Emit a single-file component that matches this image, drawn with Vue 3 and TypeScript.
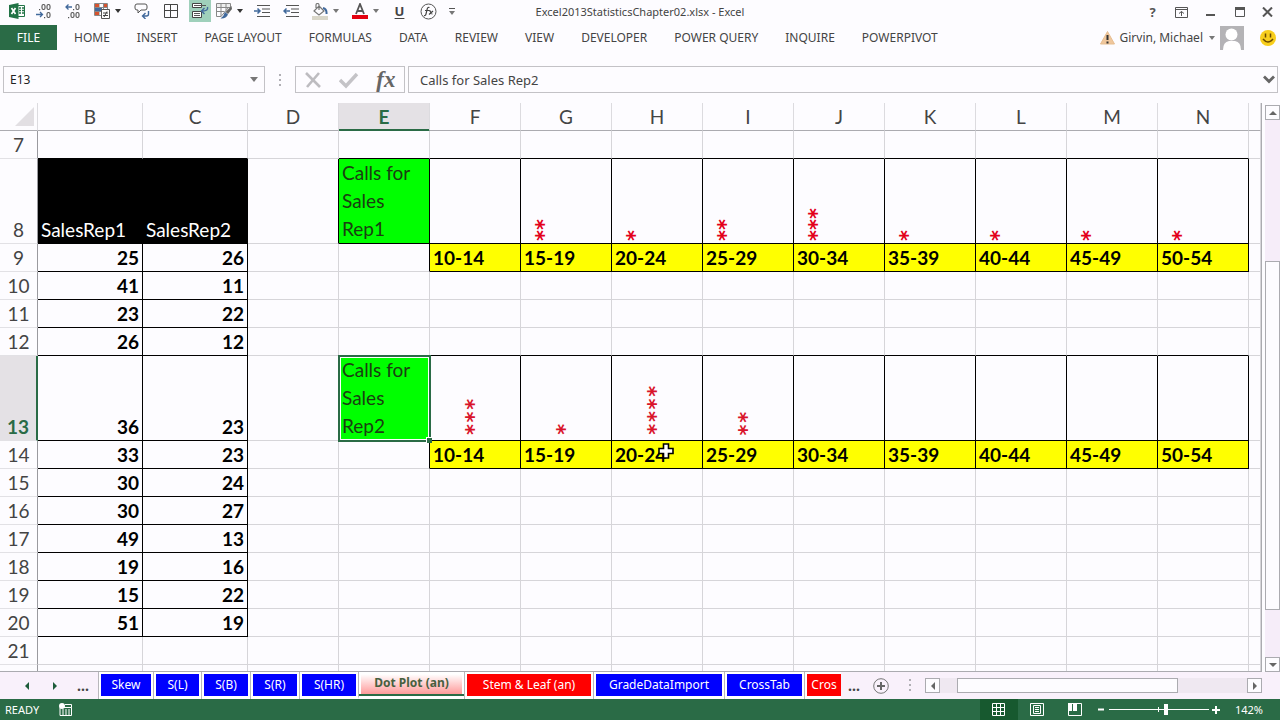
<script setup lang="ts">
import { ref } from 'vue'

interface Cell { text?: string; cls?: string }
interface Row { n: string; cells: Cell[]; cls?: string }

const tabs = ['HOME', 'INSERT', 'PAGE LAYOUT', 'FORMULAS', 'DATA', 'REVIEW', 'VIEW', 'DEVELOPER', 'POWER QUERY', 'INQUIRE', 'POWERPIVOT']
const cols = ['B', 'C', 'D', 'E', 'F', 'G', 'H', 'I', 'J', 'K', 'L', 'M', 'N', '']
const bins = ['10-14', '15-19', '20-24', '25-29', '30-34', '35-39', '40-44', '45-49', '50-54']
const rep1Dots = [0, 2, 1, 2, 3, 1, 1, 1, 1]
const rep2Dots = [3, 1, 4, 2, 0, 0, 0, 0, 0]
const data: Record<number, [number, number]> = {
  9: [25, 26], 10: [41, 11], 11: [23, 22], 12: [26, 12], 13: [36, 23], 14: [33, 23],
  15: [30, 24], 16: [30, 27], 17: [49, 13], 18: [19, 16], 19: [15, 22], 20: [51, 19],
}

const rows: Row[] = []
for (let n = 7; n <= 22; n++) {
  const cells: Cell[] = []
  const pair = data[n]
  if (pair) cells.push({ text: String(pair[0]), cls: 'num' }, { text: String(pair[1]), cls: 'num' })
  else if (n === 8) cells.push({ text: 'SalesRep1', cls: 'head' }, { text: 'SalesRep2', cls: 'head' })
  else if (n === 7) cells.push({ cls: 'kb' }, { cls: 'kb' })
  else cells.push({}, {})
  const dotRow = n === 8 || n === 13
  cells.push({ cls: dotRow ? 'd-edge' : '' })
  if (dotRow) {
    cells.push({ text: n === 8 ? 'Calls for Sales Rep1' : 'Calls for Sales Rep2', cls: n === 8 ? 'green' : 'green active' })
    const counts = n === 8 ? rep1Dots : rep2Dots
    counts.forEach(c => cells.push({ text: '*'.repeat(c), cls: n === 8 ? 'plot small' : 'plot' }))
  } else if (n === 9 || n === 14) {
    cells.push({ cls: 'kr' })
    bins.forEach(b => cells.push({ text: b, cls: 'bin' }))
  } else {
    for (let i = 0; i < 10; i++) cells.push({ cls: n === 7 || n === 12 ? 'kb' : '' })
  }
  cells.push({})
  rows.push({ n: n < 22 ? String(n) : '', cells, cls: (dotRow ? 'tall' : '') + (n === 13 ? ' current' : '') })
}

const sheets = [
  { name: 'Skew', color: 'blue', width: 50 }, { name: 'S(L)', color: 'blue', width: 43 }, { name: 'S(B)', color: 'blue', width: 44 },
  { name: 'S(R)', color: 'blue', width: 44 }, { name: 'S(HR)', color: 'blue', width: 54 }, { name: 'Dot Plot (an)', color: 'sel', width: 101 },
  { name: 'Stem & Leaf (an)', color: 'red', width: 124 }, { name: 'GradeDataImport', color: 'blue', width: 126 },
  { name: 'CrossTab', color: 'blue', width: 75 }, { name: 'Cros', color: 'red cut', width: 34 },
]
const nameBox = ref('E13')
const formula = ref('Calls for Sales Rep2')
const zoom = ref(142)
</script>

<template>
  <div class="app">
    <header class="title">
      <div class="qat">
        <button aria-label="Excel" class="b24"><svg width="16" height="16" viewBox="0 0 16 16"><path d="M9 2.500h6.500v11H9" fill="#fff" stroke="#217346"/><path d="M10 5h2M13 5h2M10 7.500h2M13 7.500h2M10 10h2M13 10h2" stroke="#217346" stroke-width="1.500"/><path d="M0 2 9.500 0v16L0 14z" fill="#217346"/><path d="m2.500 5 4 6M6.500 5l-4 6" stroke="#fff" stroke-width="1.700"/></svg></button>
        <button aria-label="Decrease decimal" class="b29"><svg width="16" height="16" viewBox="0 0 16 16"><g fill="none" stroke="#555" stroke-width="1.100"><rect x="6" y="1.500" width="3" height="5" rx="1.500"/><rect x="11" y="1.500" width="3" height="5" rx="1.500"/><rect x="11" y="9.500" width="3" height="5" rx="1.500"/></g><path d="M3 6h1.200v1.200H3zM8 14h1.200v1.200H8z" fill="#555"/><path d="M0 11.500h6M4 9l2.500 2.500L4 14" fill="none" stroke="#41699c" stroke-width="1.300"/></svg></button>
        <button aria-label="Increase decimal" class="b29"><svg width="16" height="16" viewBox="0 0 16 16"><g fill="none" stroke="#555" stroke-width="1.100"><rect x="11" y="1.500" width="3" height="5" rx="1.500"/><rect x="6" y="9.500" width="3" height="5" rx="1.500"/><rect x="11" y="9.500" width="3" height="5" rx="1.500"/></g><path d="M8 6h1.200v1.200H8zM3 14h1.200v1.200H3z" fill="#555"/><path d="M7 4H1M3.500 1.500 1 4l2.500 2.500" fill="none" stroke="#41699c" stroke-width="1.300"/></svg></button>
        <button aria-label="Conditional formatting" class="b40 split"><svg width="16" height="16" viewBox="0 0 16 16"><path d="M.5.500h13v12H.5zM.5 4.500h13M.5 8.500h13M5 .5v12M9.500 .5v12" fill="#fff" stroke="#888"/><path d="M1 1h4v3H1zM1 9h4v3H1z" fill="#d6532f"/><path d="M1 5h7v3H1z" fill="#41699c"/><path d="M10 1h3v3h-3z" fill="#d6532f"/><path d="M7.500 6.500h8v9h-8z" fill="#fff" stroke="#555"/><path d="M9 10h5M9 12.500h5M13 8.500l-3 5.500" stroke="#444"/></svg><i class="caret dark"></i></button>
        <button aria-label="Comment" class="b29"><svg width="16" height="16" viewBox="0 0 16 16"><path d="M3 1h8q2 0 2 2v2q0 2-2 2H7l-3 3V7H3Q1 7 1 5V3q0-2 2-2z" fill="none" stroke="#555"/><path d="M14.500 8v3q0 2-2 2H9M11.500 10l-3 3 3 3" fill="none" stroke="#41699c" stroke-width="1.400"/></svg></button>
        <button aria-label="Borders" class="b29"><svg width="14" height="14" viewBox="0 0 14 14"><path d="M.5.500h13v13H.5zM6.500 .5v13M.5 6.500h13" fill="none" stroke="#444"/></svg></button>
        <button aria-label="Track changes" class="on"><svg width="18" height="18" viewBox="0 0 18 18"><path d="M1.500 1.500h9v4h-9zM1.500 9.500h9v6h-9z" fill="#fff" stroke="#444"/><path d="M3 3.500h12M3 11.500h6M3 13.500h6" stroke="#555"/><path d="M16.500 5q1 4-5 4M13.500 6l-3 3 3 3" fill="none" stroke="#41699c" stroke-width="1.400"/></svg></button>
        <button aria-label="Format table" class="b36 split"><svg width="16" height="16" viewBox="0 0 16 16"><path d="M.5.500h14v4h-14z" fill="#eee" stroke="#888"/><path d="M.5 4.500h12L5 13.500H.5zM5 .5v13M10 .5v7M.5 8.500h8" fill="none" stroke="#888"/><path d="m15.500 3-6 6 2.500 2L16 6z" fill="#666"/><path d="M9 9l3 2.500Q10 16 4.500 15.500 8 13 9 9z" fill="#41699c"/></svg><i class="caret dark"></i></button>
        <button aria-label="Increase indent" class="b29"><svg width="16" height="14" viewBox="0 0 16 14"><path d="M3 1.500h13M8 5h8M8 8.500h8M3 12.500h13" stroke="#555"/><path d="M0 7h6M3.500 4.500 6 7 3.500 9.500" fill="none" stroke="#41699c" stroke-width="1.500"/></svg></button>
        <button aria-label="Decrease indent" class="b29"><svg width="16" height="14" viewBox="0 0 16 14"><path d="M3 1.500h13M8 5h8M8 8.500h8M3 12.500h13" stroke="#555"/><path d="M7 7H1M3.500 4.500 1 7l2.500 2.500" fill="none" stroke="#41699c" stroke-width="1.500"/></svg></button>
        <button aria-label="Fill color" class="b40 split"><svg width="17" height="17" viewBox="0 0 17 17"><path d="M1 13h16v4H1z" fill="#d9d6c9"/><path d="m8 3 5 5-5 4-5-4zM8 7V2q0-1.500-1.500-1.500T5 2v3" fill="none" stroke="#777" stroke-width="1.200"/><path d="M12 5q4 1 3.500 6" stroke="#41699c" stroke-width="2" fill="none"/></svg><i class="caret"></i></button>
        <button aria-label="Font color" class="b40 split"><svg width="16" height="16" viewBox="0 0 16 16"><path d="M0 12h16v4H0z" fill="#e3000f"/><path d="M4 11 8 1l4 10M5.500 8h5" fill="none" stroke="#555" stroke-width="1.800"/></svg><i class="caret"></i></button>
        <button aria-label="Underline" class="b29 under">U</button>
        <button aria-label="Insert function" class="b29"><svg width="17" height="17" viewBox="0 0 17 17"><circle cx="8.500" cy="8.500" r="7.500" fill="none" stroke="#555"/><path d="M9.500 4.500Q7.500 3.500 7 7l-1 4q-.5 2-2 1.500M5 7.500h4M9 8q1-1 1.500 1t2 2M13 8l-4 3.500" fill="none" stroke="#444" stroke-width="1.200"/></svg></button>
        <button aria-label="Customize toolbar" class="more"><span></span><i class="caret"></i></button>
      </div>
      <div class="doc">Excel2013StatisticsChapter02.xlsx - Excel</div>
      <div class="win">
        <button aria-label="Help" class="help">?</button>
        <button aria-label="Ribbon display options"><svg width="13" height="11" viewBox="0 0 13 11"><path d="M.5.500h12v10H.5zM.5 2.500h12M6.500 9V4.500M4 6.500l2.500-2 2.500 2" fill="none" stroke="#555"/></svg></button>
        <button aria-label="Minimize"><svg width="10" height="11" viewBox="0 0 10 11"><path d="M0 7h9v2H0z" fill="#555"/></svg></button>
        <button aria-label="Maximize"><svg width="10" height="10" viewBox="0 0 10 10"><path d="M.5 1h9v8.500h-9z" fill="none" stroke="#555"/><path d="M0 0h10v3H0z" fill="#555"/></svg></button>
        <button aria-label="Close"><svg width="11" height="10" viewBox="0 0 11 10"><path d="m1 .5 9 9M10 .5l-9 9" stroke="#555" stroke-width="2"/></svg></button>
      </div>
    </header>

    <nav class="ribbon">
      <button class="file">FILE</button>
      <button v-for="t in tabs" :key="t" class="tab">{{ t }}</button>
      <div class="user">
        <svg width="15" height="14" viewBox="0 0 15 14"><path d="M7.500.500 14.500 13H.5z" fill="#f0c79c" stroke="#e6bd90"/><path d="M7.500 4v5M7.500 10.500v2" stroke="#333" stroke-width="2"/></svg>
        <button class="acct">Girvin, Michael <i class="caret"></i></button>
        <svg width="24" height="24" viewBox="0 0 24 24"><path d="M0 0h24v24H0z" fill="#b4b3b6"/><circle cx="11.500" cy="8.500" r="6" fill="#fff"/><path d="M3 24q0-8 6-9h6q6 1 6 9z" fill="#fff"/></svg>
        <svg class="smile" width="16" height="16" viewBox="0 0 16 16"><circle cx="8" cy="8" r="8" fill="#f8ce1c"/><path d="M5.500 3.500v4M10.500 3.500v4M3 9q5 6 10 0" fill="none" stroke="#6b4a00" stroke-width="1.500"/></svg>
      </div>
    </nav>

    <div class="fbar">
      <div class="namebox"><input v-model="nameBox" aria-label="Name box"><button aria-label="Open name list"><i class="caret big"></i></button></div>
      <i class="grip"></i>
      <div class="fx">
        <button aria-label="Cancel"><svg width="18" height="18" viewBox="0 0 18 18"><path d="m2 2 14 14M15 2 3 16" stroke="#bdbcc0" stroke-width="2.600"/></svg></button>
        <button aria-label="Enter"><svg width="20" height="18" viewBox="0 0 20 18"><path d="m1 9 6 6L18 3" fill="none" stroke="#c4c3c7" stroke-width="3.400"/></svg></button>
        <button aria-label="Insert function" class="fxi">fx</button>
      </div>
      <div class="formula"><input v-model="formula" aria-label="Formula"><button aria-label="Expand formula bar"><svg width="12" height="9" viewBox="0 0 12 9"><path d="m1 1.500 5 5 5-5" fill="none" stroke="#666" stroke-width="2.800"/></svg></button></div>
    </div>

    <main class="work">
      <div class="grid">
        <table>
          <colgroup><col class="c0"><col class="c1"><col class="c1"><col v-for="i in 11" :key="i" class="c2"><col></colgroup>
          <thead><tr><th class="corner"><i></i></th><th v-for="c in cols" :key="c" scope="col" :class="{ cur: c === 'E' }">{{ c }}</th></tr></thead>
          <tbody>
            <tr v-for="(r, k) in rows" :key="k" :class="r.cls">
              <th scope="row">{{ r.n }}</th>
              <td v-for="(c, i) in r.cells" :key="i" :class="c.cls"><span v-if="c.text">{{ c.text }}</span></td>
            </tr>
          </tbody>
        </table>
        <svg class="pointer" width="16" height="16" viewBox="0 0 16 16"><path d="M5.500 1h5v4.500H15v5h-4.500V15h-5v-4.500H1v-5h4.500z" fill="#fff" stroke="#000" stroke-width="1.600"/></svg>
      </div>
      <div class="vscroll">
        <button aria-label="Scroll up"><i class="tri up"></i></button>
        <div class="vtrack"><div class="vthumb"></div></div>
        <button aria-label="Scroll down"><i class="tri down"></i></button>
      </div>
    </main>

    <div class="sheets">
      <div class="nav">
        <button aria-label="Previous sheet"><i class="tri left g"></i></button>
        <button aria-label="Next sheet"><i class="tri right g"></i></button>
        <button class="dots">...</button>
      </div>
      <div v-for="s in sheets" :key="s.name" class="sheet" :class="s.color"><button :style="{ width: s.width + 'px' }">{{ s.name }}</button></div>
      <button class="dots after">...</button>
      <button class="add" aria-label="New sheet"><svg width="16" height="16" viewBox="0 0 16 16"><circle cx="8" cy="8" r="7.300" fill="none" stroke="#777"/><path d="M8 4v8M4 8h8" stroke="#666" stroke-width="2"/></svg></button>
      <i class="grip small"></i>
      <div class="hscroll">
        <button aria-label="Scroll left"><i class="tri left"></i></button>
        <div class="htrack"><div class="hthumb"></div></div>
        <button aria-label="Scroll right"><i class="tri right"></i></button>
      </div>
    </div>

    <footer class="status">
      <span>READY</span>
      <svg class="rec" width="13" height="13" viewBox="0 0 13 13"><path d="M1 4.500h11.500v8H1z" fill="none" stroke="#fff"/><path d="M6 1.500h6.500v3" fill="none" stroke="#fff"/><path d="M3 7h2M6 7h2M9 7h2M3 9h2M6 9h2M9 9h2M3 11h2M6 11h2M9 11h2" stroke="#fff"/><circle cx="3" cy="3" r="3" fill="#fff"/></svg>
      <div class="views">
        <button class="sel" aria-label="Normal view"><svg width="13" height="13" viewBox="0 0 13 13"><path d="M.5.500h12v12H.5zM4.500 .5v12M8.500 .5v12M.5 4.500h12M.5 8.500h12" fill="none" stroke="#fff"/></svg></button>
        <button aria-label="Page layout"><svg width="14" height="13" viewBox="0 0 14 13"><path d="M.5.500h13v12H.5zM3.500 2.500h7v8h-7zM5 4.500h4M5 6.500h4M5 8.500h4" fill="none" stroke="#fff"/></svg></button>
        <button aria-label="Page break preview"><svg width="14" height="13" viewBox="0 0 14 13"><path d="M.5.500h13v12H.5z" fill="none" stroke="#fff"/><path d="M0 0h4v8H0zM5 0h4v8H5z" fill="#fff"/></svg></button>
      </div>
      <button class="zb" aria-label="Zoom out"><svg width="7" height="7" viewBox="0 0 7 7"><path d="M0 2.500h6v2H0z" fill="#fff"/></svg></button>
      <input v-model="zoom" type="range" min="10" max="240" aria-label="Zoom">
      <button class="zb" aria-label="Zoom in"><svg width="8" height="8" viewBox="0 0 8 8"><path d="M3 0h2v3h3v2H5v3H3V5H0V3h3z" fill="#fff"/></svg></button>
      <span class="pct">{{ zoom }}%</span>
    </footer>
  </div>
</template>

<style>
html, body { margin: 0; overflow: hidden; }
</style>

<style scoped>
* { box-sizing: border-box; }
.app { height: 100vh; display: flex; flex-direction: column; background: #fdfcff; color: #444; font: 12px/16px "Noto Sans", "Open Sans", sans-serif; overflow: hidden; }
button { border: 0; padding: 0; margin: 0; background: none; font: inherit; color: inherit; display: flex; align-items: center; justify-content: center; flex: none; white-space: nowrap; }
svg { display: block; flex: none; }
i { display: block; flex: none; }
input { font: inherit; color: inherit; border: 0; background: none; min-width: 0; padding: 0; margin: 0; outline: 0; }

.title { height: 24px; flex: none; display: grid; grid-template-columns: 1fr auto 1fr; }
.qat { display: flex; width: 0; padding-left: 4px; }
.qat button { height: 22px; }
.b24 { width: 25px; }
.b29 { width: 29px; }
.b36 { width: 36px; }
.b40 { width: 40px; }
.split { gap: 5px; }
.on { width: 22px; background: #9fd0bb; }
.qat .on { margin-left: 4px; }
.caret { width: 0; height: 0; border: 3px solid transparent; border-top: 4px solid #777; border-bottom: 0; }
.caret.dark { border-top-color: #333; }
.caret.big { border-width: 5px 4px 0; }
.under { font-weight: 700; font-size: 13px; text-decoration: underline; text-underline-offset: 2px; }
.more { width: 18px; flex-direction: column; gap: 2px; }
.more span { width: 6px; height: 1px; background: #555; }
.doc { line-height: 24px; font-size: 11px; }
.win { display: flex; justify-content: flex-end; }
.win button { width: 29px; }
.win button:last-child { width: 26px; }
.help { font-weight: 700; font-size: 13px; color: #555; }

.ribbon { height: 25px; flex: none; display: flex; gap: 1px; margin-top: 1px; }
.file { width: 57px; background: #2a6b46; color: #fff; }
.tab { padding: 0 13px; }
.tab:nth-child(2) { margin-left: 3px; }
.user { margin-left: auto; display: flex; align-items: center; gap: 5px; padding-right: 4px; }
.acct { gap: 6px; }
.smile { margin-left: 11px; }

.fbar { display: flex; flex: none; height: 27px; margin-top: 16px; }
.namebox, .fx, .formula { border: 1px solid #c3c2c6; display: flex; align-items: center; }
.namebox { width: 262px; margin-left: 3px; padding: 0 6px; color: #222; }
.namebox input, .formula input { flex: 1; }
.grip { width: 2px; height: 12px; margin: 8px 14px 0; background: repeating-linear-gradient(#b0afb4 0 2px, transparent 2px 5px); }
.fx { width: 110px; justify-content: space-around; }
.fxi { font: italic 700 23px/24px "Liberation Serif", serif; color: #666; }
.formula { flex: 1; margin: 0 2px 0 3px; padding: 0 2px 0 11px; font-size: 13px; }

.work { flex: 1; min-height: 0; margin-top: 10px; display: flex; }
.grid { flex: 1; min-width: 0; position: relative; overflow: hidden; border-right: 1px solid #ababb0; border-bottom: 1px solid #ababb0; }
table { width: 100%; table-layout: fixed; border-collapse: separate; border-spacing: 0; font: 19px/28px Lato, sans-serif; }
.c0 { width: 38px; }
.c1 { width: 105px; }
.c2 { width: 91px; }
th { font-weight: 400; padding: 0; height: 28px; border-right: 1px solid #dcdbdf; border-bottom: 1px solid #ababb0; line-height: 27px; }
tbody th { border-bottom-color: #e2e1e5; border-right-color: #9a9a9f; text-align: center; vertical-align: bottom; }
.corner i { width: 0; height: 0; margin: 0 0 0 15px; border-left: 19px solid transparent; border-bottom: 19px solid #e2dfe3; }
.cur { background: #e4e1e5; color: #2a6b46; font-weight: 700; border-bottom-color: #2a6b46; box-shadow: inset 0 -1px #2a6b46; }
td { height: 28px; padding: 0 3px; border-right: 1px solid #d6d5d9; border-bottom: 1px solid #d6d5d9; color: #000; line-height: 27px; vertical-align: bottom; overflow: hidden; }
td span { display: block; }
.tall th, .tall td { height: 85px; }
.kb { border-bottom-color: #000; }
.kr, .d-edge { border-right-color: #000; }
.num { font-weight: 700; text-align: right; border-color: #000; }
.head { background: #000; color: #fff; border-color: #000; }
.green { background: #0f0; color: #1b3d12; border-color: #000; line-height: 28px; }
.bin { background: #ff0; font-weight: 700; border-color: #000; }
.plot { border-color: #000; color: #d9142b; padding: 0 0 4px 24px; }
.plot span { writing-mode: vertical-rl; font: 700 21px/24px "DejaVu Sans Mono", monospace; }
.plot.small { padding: 0 0 2px 3px; color: #e3001b; }
.plot.small span { font-family: "DejaVu Sans", sans-serif; }
.current th { background: #e4e1e5; color: #2a6b46; font-weight: 700; border-right: 2px solid #2a6b46; }
.active { position: relative; overflow: visible; }
.active::before { content: ""; position: absolute; inset: -1px -2px -2px -1px; border: 2px solid #2a6b46; box-shadow: inset 0 0 0 1px #fff; }
.active::after { content: ""; position: absolute; right: -3px; bottom: -3px; width: 5px; height: 5px; background: #2a6b46; box-shadow: -1px -1px #fff; }
.pointer { position: absolute; left: 658px; top: 340px; }

.vscroll { width: 15px; margin: 2px 0 0 3px; display: flex; flex-direction: column; background: #f6edf9; }
.vscroll button, .hscroll button { width: 15px; height: 15px; border: 1px solid #ababb0; background: #fdfcff; }
.vtrack { flex: 1; display: grid; grid-template-rows: 141fr 349fr 47fr; }
.vthumb { grid-row: 2; border: 1px solid #ababb0; background: #fdfcff; }
.tri { width: 0; height: 0; border: 4px solid transparent; }
.up { border-bottom-color: #666; border-top: 0; }
.down { border-top-color: #666; border-bottom: 0; }
.left { border-right-color: #666; border-left: 0; }
.right { border-left-color: #666; border-right: 0; }
.left.g { border-right-color: #1d5c3a; }
.right.g { border-left-color: #1d5c3a; }

.sheets { height: 27px; flex: none; display: flex; background: #f9f1fb; }
.nav { width: 98px; display: flex; padding-left: 13px; flex: none; }
.nav button { width: 28px; }
.dots { font-weight: 700; font-size: 14px; }
.sheet { flex: none; display: flex; background: #fff; border-left: 1px solid #b8b7bb; padding: 2px; }
.sheet button { height: 22px; color: #fff; background: #00f; }
.sheet.red button { background: #f00; }
.sheet.sel { border-bottom: 3px solid #fff; box-shadow: inset 0 -2px #2a6b46; padding: 0 2px; }
.sheet.sel button { height: 22px; background: linear-gradient(#fff 10%, #ff9a9a); color: #47603f; font-weight: 700; }
.sheet.cut { padding-right: 0; }
.after { width: 26px; }
.add { width: 28px; }
.grip.small { margin: 7px 14px 0; }
.hscroll { flex: 1; display: flex; align-items: center; padding-right: 18px; }
.htrack { flex: 1; height: 15px; background: #efe8f1; display: grid; grid-template-columns: 17fr 221fr 69fr; }
.hthumb { grid-column: 2; border: 1px solid #ababb0; background: #fdfcff; }

.status { height: 21px; flex: none; background: #2a6b46; color: #fff; display: flex; align-items: center; padding: 0 17px 0 5px; font-size: 11px; }
.rec { margin-left: 20px; }
.views { margin-left: auto; display: flex; align-self: stretch; }
.views button { width: 38px; }
.views .sel { background: #17592f; }
.zb { width: 15px; }
.status input { appearance: none; width: 100px; height: 15px; background: linear-gradient(#fff, #fff) 50% 50% / 100% 1px no-repeat, linear-gradient(#fff, #fff) 50% 50% / 1px 5px no-repeat; }
.status input::-webkit-slider-thumb { appearance: none; width: 4px; height: 11px; background: #fff; }
.pct { margin-left: 11px; }
</style>
